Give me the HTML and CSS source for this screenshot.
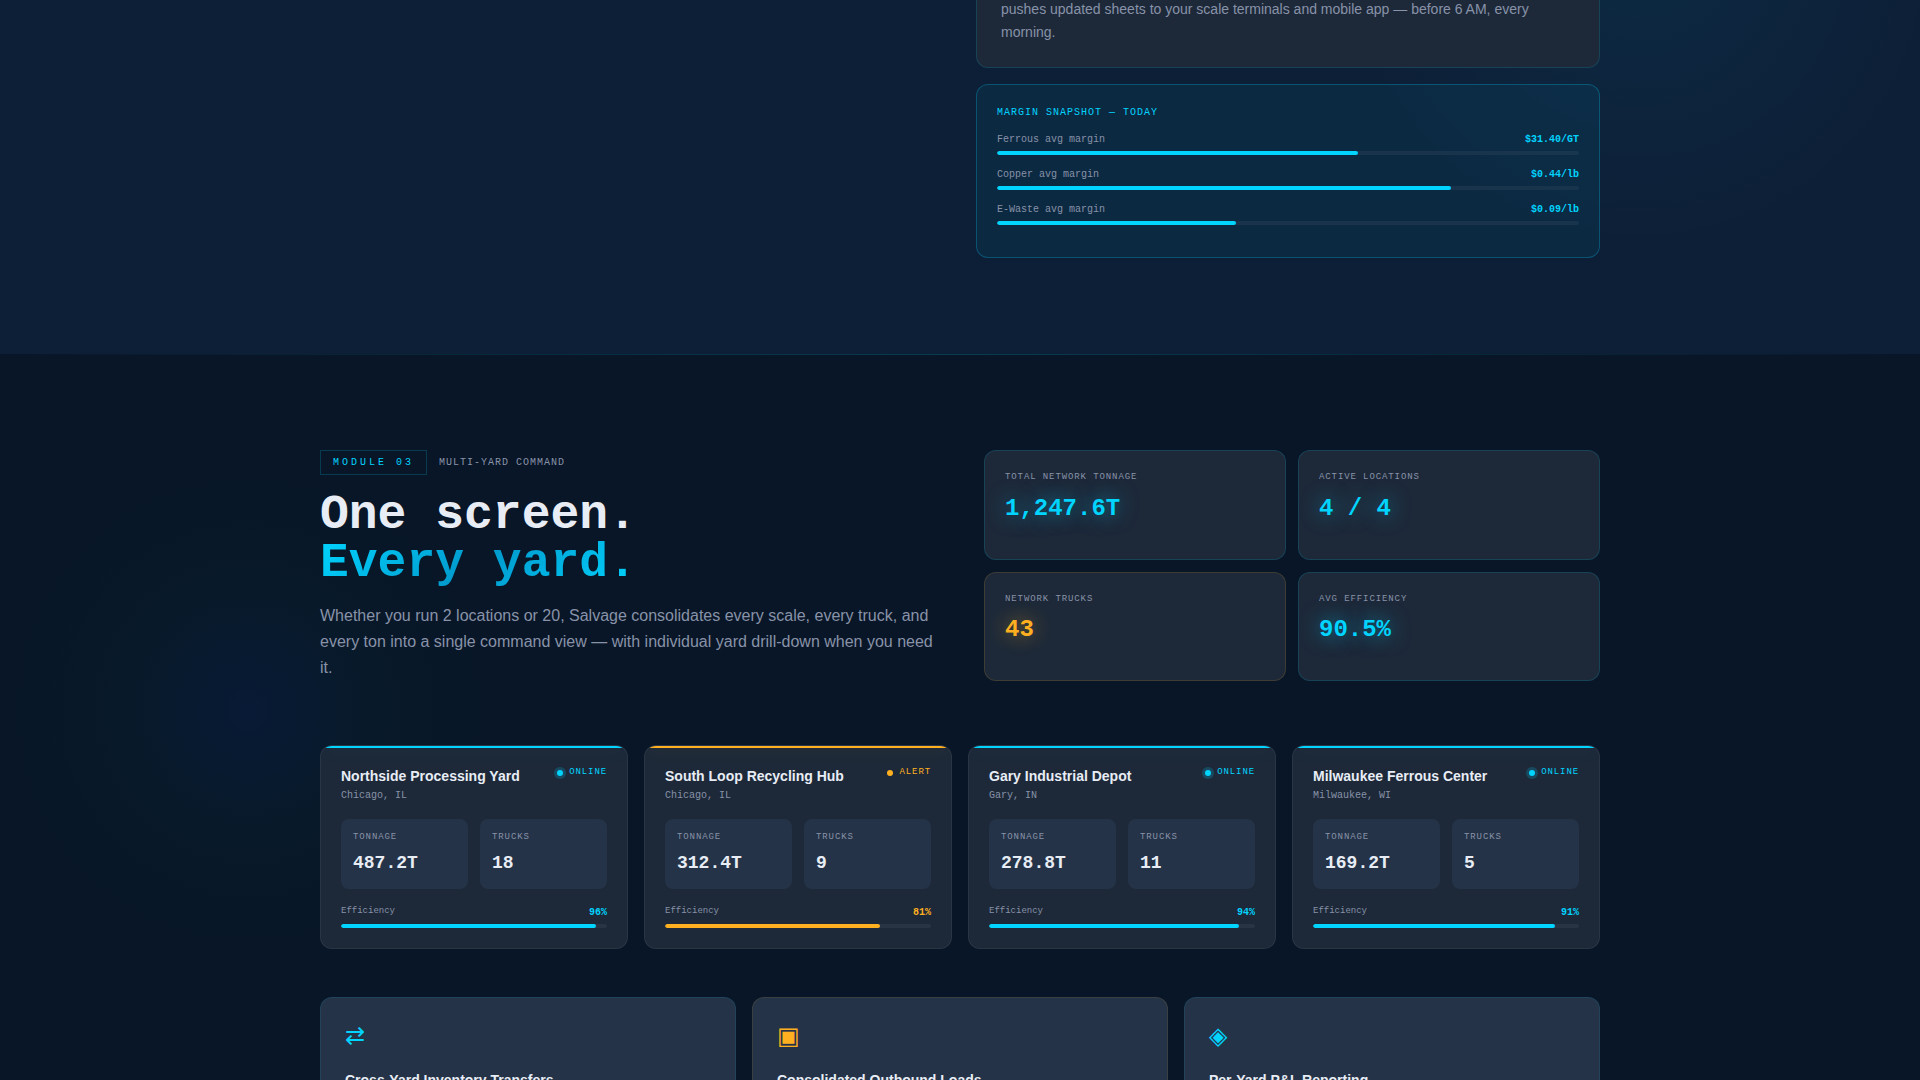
FILE: index.html
```html
<!DOCTYPE html>
<html lang="en">
<head>
  <meta charset="UTF-8">
  <title>Salvage</title>
  <link rel="stylesheet" href="styles.css">
</head>
<body>

  <!-- Module 02 -->
  <section class="pricing">
    <div class="glow glow-right"></div>
    <div class="container pricing-grid">
      <div class="pricing-side">
        <div class="card step-card">
          <p>pushes updated sheets to your scale terminals and mobile app — before 6 AM, every morning.</p>
        </div>
        <div class="card snapshot">
          <div class="snapshot-title">MARGIN SNAPSHOT — TODAY</div>
          <div class="margin-row">
            <div class="row"><span>Ferrous avg margin</span><b>$31.40/GT</b></div>
            <div class="bar"><div class="fill" style="width:62%"></div></div>
          </div>
          <div class="margin-row">
            <div class="row"><span>Copper avg margin</span><b>$0.44/lb</b></div>
            <div class="bar"><div class="fill" style="width:78%"></div></div>
          </div>
          <div class="margin-row">
            <div class="row"><span>E-Waste avg margin</span><b>$0.09/lb</b></div>
            <div class="bar"><div class="fill" style="width:41%"></div></div>
          </div>
        </div>
      </div>
    </div>
  </section>

  <!-- Module 03 -->
  <section class="yards">
    <div class="glow glow-left"></div>
    <div class="container">
      <div class="intro">
        <div>
          <div class="module">
            <span class="badge">MODULE 03</span>
            <span class="module-name">MULTI-YARD COMMAND</span>
          </div>
          <h2>One screen.<br><span class="gradient-text">Every yard.</span></h2>
          <p class="lead">Whether you run 2 locations or 20, Salvage consolidates every scale, every truck, and every ton into a single command view — with individual yard drill-down when you need it.</p>
        </div>
        <div class="stats">
          <div class="card stat">
            <div class="label">TOTAL NETWORK TONNAGE</div>
            <div class="value">1,247.6T</div>
          </div>
          <div class="card stat">
            <div class="label">ACTIVE LOCATIONS</div>
            <div class="value">4 / 4</div>
          </div>
          <div class="card stat amber">
            <div class="label">NETWORK TRUCKS</div>
            <div class="value">43</div>
          </div>
          <div class="card stat">
            <div class="label">AVG EFFICIENCY</div>
            <div class="value">90.5%</div>
          </div>
        </div>
      </div>

      <div class="yard-grid">
        <div class="card yard">
          <div class="yard-head">
            <div>
              <h3>Northside Processing Yard</h3>
              <div class="city">Chicago, IL</div>
            </div>
            <div class="status"><i></i>ONLINE</div>
          </div>
          <div class="yard-nums">
            <div class="num"><div class="label">TONNAGE</div><div class="n">487.2T</div></div>
            <div class="num"><div class="label">TRUCKS</div><div class="n">18</div></div>
          </div>
          <div class="row eff"><span>Efficiency</span><b>96%</b></div>
          <div class="bar"><div class="fill" style="width:96%"></div></div>
        </div>

        <div class="card yard amber">
          <div class="yard-head">
            <div>
              <h3>South Loop Recycling Hub</h3>
              <div class="city">Chicago, IL</div>
            </div>
            <div class="status"><i></i>ALERT</div>
          </div>
          <div class="yard-nums">
            <div class="num"><div class="label">TONNAGE</div><div class="n">312.4T</div></div>
            <div class="num"><div class="label">TRUCKS</div><div class="n">9</div></div>
          </div>
          <div class="row eff"><span>Efficiency</span><b>81%</b></div>
          <div class="bar"><div class="fill" style="width:81%"></div></div>
        </div>

        <div class="card yard">
          <div class="yard-head">
            <div>
              <h3>Gary Industrial Depot</h3>
              <div class="city">Gary, IN</div>
            </div>
            <div class="status"><i></i>ONLINE</div>
          </div>
          <div class="yard-nums">
            <div class="num"><div class="label">TONNAGE</div><div class="n">278.8T</div></div>
            <div class="num"><div class="label">TRUCKS</div><div class="n">11</div></div>
          </div>
          <div class="row eff"><span>Efficiency</span><b>94%</b></div>
          <div class="bar"><div class="fill" style="width:94%"></div></div>
        </div>

        <div class="card yard">
          <div class="yard-head">
            <div>
              <h3>Milwaukee Ferrous Center</h3>
              <div class="city">Milwaukee, WI</div>
            </div>
            <div class="status"><i></i>ONLINE</div>
          </div>
          <div class="yard-nums">
            <div class="num"><div class="label">TONNAGE</div><div class="n">169.2T</div></div>
            <div class="num"><div class="label">TRUCKS</div><div class="n">5</div></div>
          </div>
          <div class="row eff"><span>Efficiency</span><b>91%</b></div>
          <div class="bar"><div class="fill" style="width:91%"></div></div>
        </div>
      </div>

      <div class="features">
        <div class="card feature">
          <div class="icon">⇄</div>
          <h3>Cross-Yard Inventory Transfers</h3>
        </div>
        <div class="card feature amber">
          <div class="icon">▣</div>
          <h3>Consolidated Outbound Loads</h3>
        </div>
        <div class="card feature">
          <div class="icon">◈</div>
          <h3>Per-Yard P&amp;L Reporting</h3>
        </div>
      </div>
    </div>
  </section>

</body>
</html>
```

FILE: styles.css
```css
*{
  box-sizing: border-box;
  margin: 0;
  padding: 0;
}
html,body{
  height: 1080px;
  overflow: hidden;
}
body{
  background: #081627;
  color: #e8edf5;
  font-family: "Liberation Sans", Arial, sans-serif;
  line-height: 1.5;
}
.container{
  width: 1280px;
  margin: 0 auto;
  position: relative;
}
.card{
  background: #1d2939;
  border: 1px solid rgba(0,212,255,0.15);
  border-radius: 12px;
}
.glow{
  position: absolute;
  border-radius: 50%;
}

/* module 02 */
.pricing{
  position: relative;
  height: 354px;
  overflow: hidden;
  background: #0d1f37;
}
.glow-right{
  width: 600px;
  height: 600px;
  right: -20px;
  top: -350px;
  background: radial-gradient(circle, rgba(0,212,255,0.06), transparent 70%);
}
.pricing-grid{
  display: grid;
  grid-template-columns: 1fr 1fr;
  gap: 32px;
}
.pricing-side{
  grid-column: 2;
}
.step-card{
  margin-top: -2px;
  border-top: none;
  border-radius: 0 0 12px 12px;
  padding: 0 24px 23.5px;
}
.step-card p{
  font-size: 14px;
  line-height: 1.625;
  color: #8892a8;
}
.snapshot{
  margin-top: 16px;
  padding: 20px;
  background: rgba(0,212,255,0.06);
  border-color: rgba(0,212,255,0.25);
}
.snapshot-title{
  font-family: "Liberation Mono", monospace;
  font-size: 10px;
  letter-spacing: 0.1em;
  color: #00d4ff;
  margin-bottom: 12px;
}
.margin-row{
  margin-bottom: 12px;
}
.row{
  display: flex;
  justify-content: space-between;
  margin-bottom: 4px;
  font-family: "Liberation Mono", monospace;
  font-size: 10px;
  color: #8892a8;
}
.row b{
  color: #00d4ff;
}
.bar{
  height: 4px;
  border-radius: 2px;
  background: rgba(255,255,255,0.05);
  overflow: hidden;
}
.fill{
  height: 4px;
  border-radius: 2px;
  background: #00d4ff;
}

/* module 03 */
.yards{
  position: relative;
  height: 726px;
  padding-top: 96px;
  overflow: hidden;
}
.yards::before{
  content: "";
  position: absolute;
  top: 0;
  left: 0;
  right: 0;
  height: 1px;
  background: linear-gradient(90deg, transparent, rgba(0,212,255,0.2), transparent);
}
.glow-left{
  width: 500px;
  height: 500px;
  left: -2px;
  top: 106px;
  background: radial-gradient(circle, rgba(10,50,130,0.16), rgba(0,80,100,0.06) 30%, transparent 70%);
}
.intro{
  display: grid;
  grid-template-columns: 1fr 1fr;
  gap: 48px;
  margin-bottom: 64px;
}
.module{
  display: flex;
  align-items: center;
  gap: 12px;
  margin-bottom: 16px;
  font-family: "Liberation Mono", monospace;
  font-size: 10px;
}
.badge{
  padding: 4px 12px;
  border: 1px solid rgba(0,212,255,0.2);
  color: #00d4ff;
  letter-spacing: 0.3em;
}
.module-name{
  color: #8892a8;
  letter-spacing: 0.1em;
}
h2{
  font-family: "Liberation Mono", monospace;
  font-size: 48px;
  line-height: 1;
  margin-bottom: 16px;
}
.gradient-text{
  background: linear-gradient(135deg, #00d4ff 0%, #0099cc 50%, #00d4ff 100%);
  -webkit-background-clip: text;
  background-clip: text;
  color: transparent;
}
.lead{
  font-size: 16px;
  line-height: 1.625;
  color: #8892a8;
}
.stats{
  display: grid;
  grid-template-columns: 1fr 1fr;
  gap: 12px;
}
.stat{
  padding: 20px;
}
.label{
  font-family: "Liberation Mono", monospace;
  font-size: 9px;
  letter-spacing: 0.1em;
  color: #8892a8;
}
.stat .label{
  margin-bottom: 8px;
}
.value{
  font-family: "Liberation Mono", monospace;
  font-size: 24px;
  line-height: 32px;
  font-weight: bold;
  color: #00d4ff;
  text-shadow: 0 0 20px rgba(0,212,255,0.6);
}
.stat.amber{
  border-color: rgba(255,176,32,0.15);
}
.amber .value{
  color: #ffb020;
  text-shadow: 0 0 20px rgba(255,176,32,0.6);
}

/* yard cards */
.yard-grid{
  display: grid;
  grid-template-columns: repeat(4, 1fr);
  gap: 16px;
  margin-bottom: 48px;
}
.yard{
  position: relative;
  overflow: hidden;
  padding: 20px;
  border-color: rgba(255,255,255,0.06);
}
.yard::before{
  content: "";
  position: absolute;
  top: 0;
  left: 0;
  right: 0;
  height: 2px;
  background: #00d4ff;
  box-shadow: 0 0 20px rgba(0,212,255,0.15);
}
.yard.amber::before{
  background: #ffb020;
  box-shadow: 0 0 20px rgba(255,176,32,0.25);
}
.yard-head{
  display: flex;
  justify-content: space-between;
  align-items: flex-start;
  margin-bottom: 16px;
}
h3{
  font-size: 14px;
  line-height: 20px;
}
.city{
  margin-top: 2px;
  font-family: "Liberation Mono", monospace;
  font-size: 10px;
  color: #8892a8;
}
.status{
  display: flex;
  align-items: center;
  gap: 6px;
  font-family: "Liberation Mono", monospace;
  font-size: 9px;
  letter-spacing: 0.1em;
  color: #00d4ff;
}
.status i{
  width: 6px;
  height: 6px;
  border-radius: 50%;
  background: #00d4ff;
  box-shadow: 0 0 0 3px rgba(0,212,255,0.2);
}
.amber .status,.amber .row b{
  color: #ffb020;
}
.amber .status i{
  background: #ffb020;
  box-shadow: none;
}
.yard-nums{
  display: grid;
  grid-template-columns: 1fr 1fr;
  gap: 12px;
  margin-bottom: 16px;
}
.num{
  padding: 12px;
  border-radius: 8px;
  background: #243347;
}
.n{
  margin-top: 4px;
  font-family: "Liberation Mono", monospace;
  font-size: 18px;
  line-height: 28px;
  font-weight: bold;
}
.eff span{
  font-size: 9px;
}
.amber .fill{
  background: #ffb020;
}

/* features */
.features{
  display: grid;
  grid-template-columns: repeat(3, 1fr);
  gap: 16px;
}
.feature{
  height: 160px;
  padding: 24px;
  background: #243347;
  border-color: rgba(0,212,255,0.1);
}
.feature.amber{
  border-color: rgba(255,176,32,0.1);
}
.icon{
  margin-bottom: 20px;
  font-size: 24px;
  line-height: 28px;
  color: #00d4ff;
}
.amber .icon{
  color: #ffb020;
}
```
